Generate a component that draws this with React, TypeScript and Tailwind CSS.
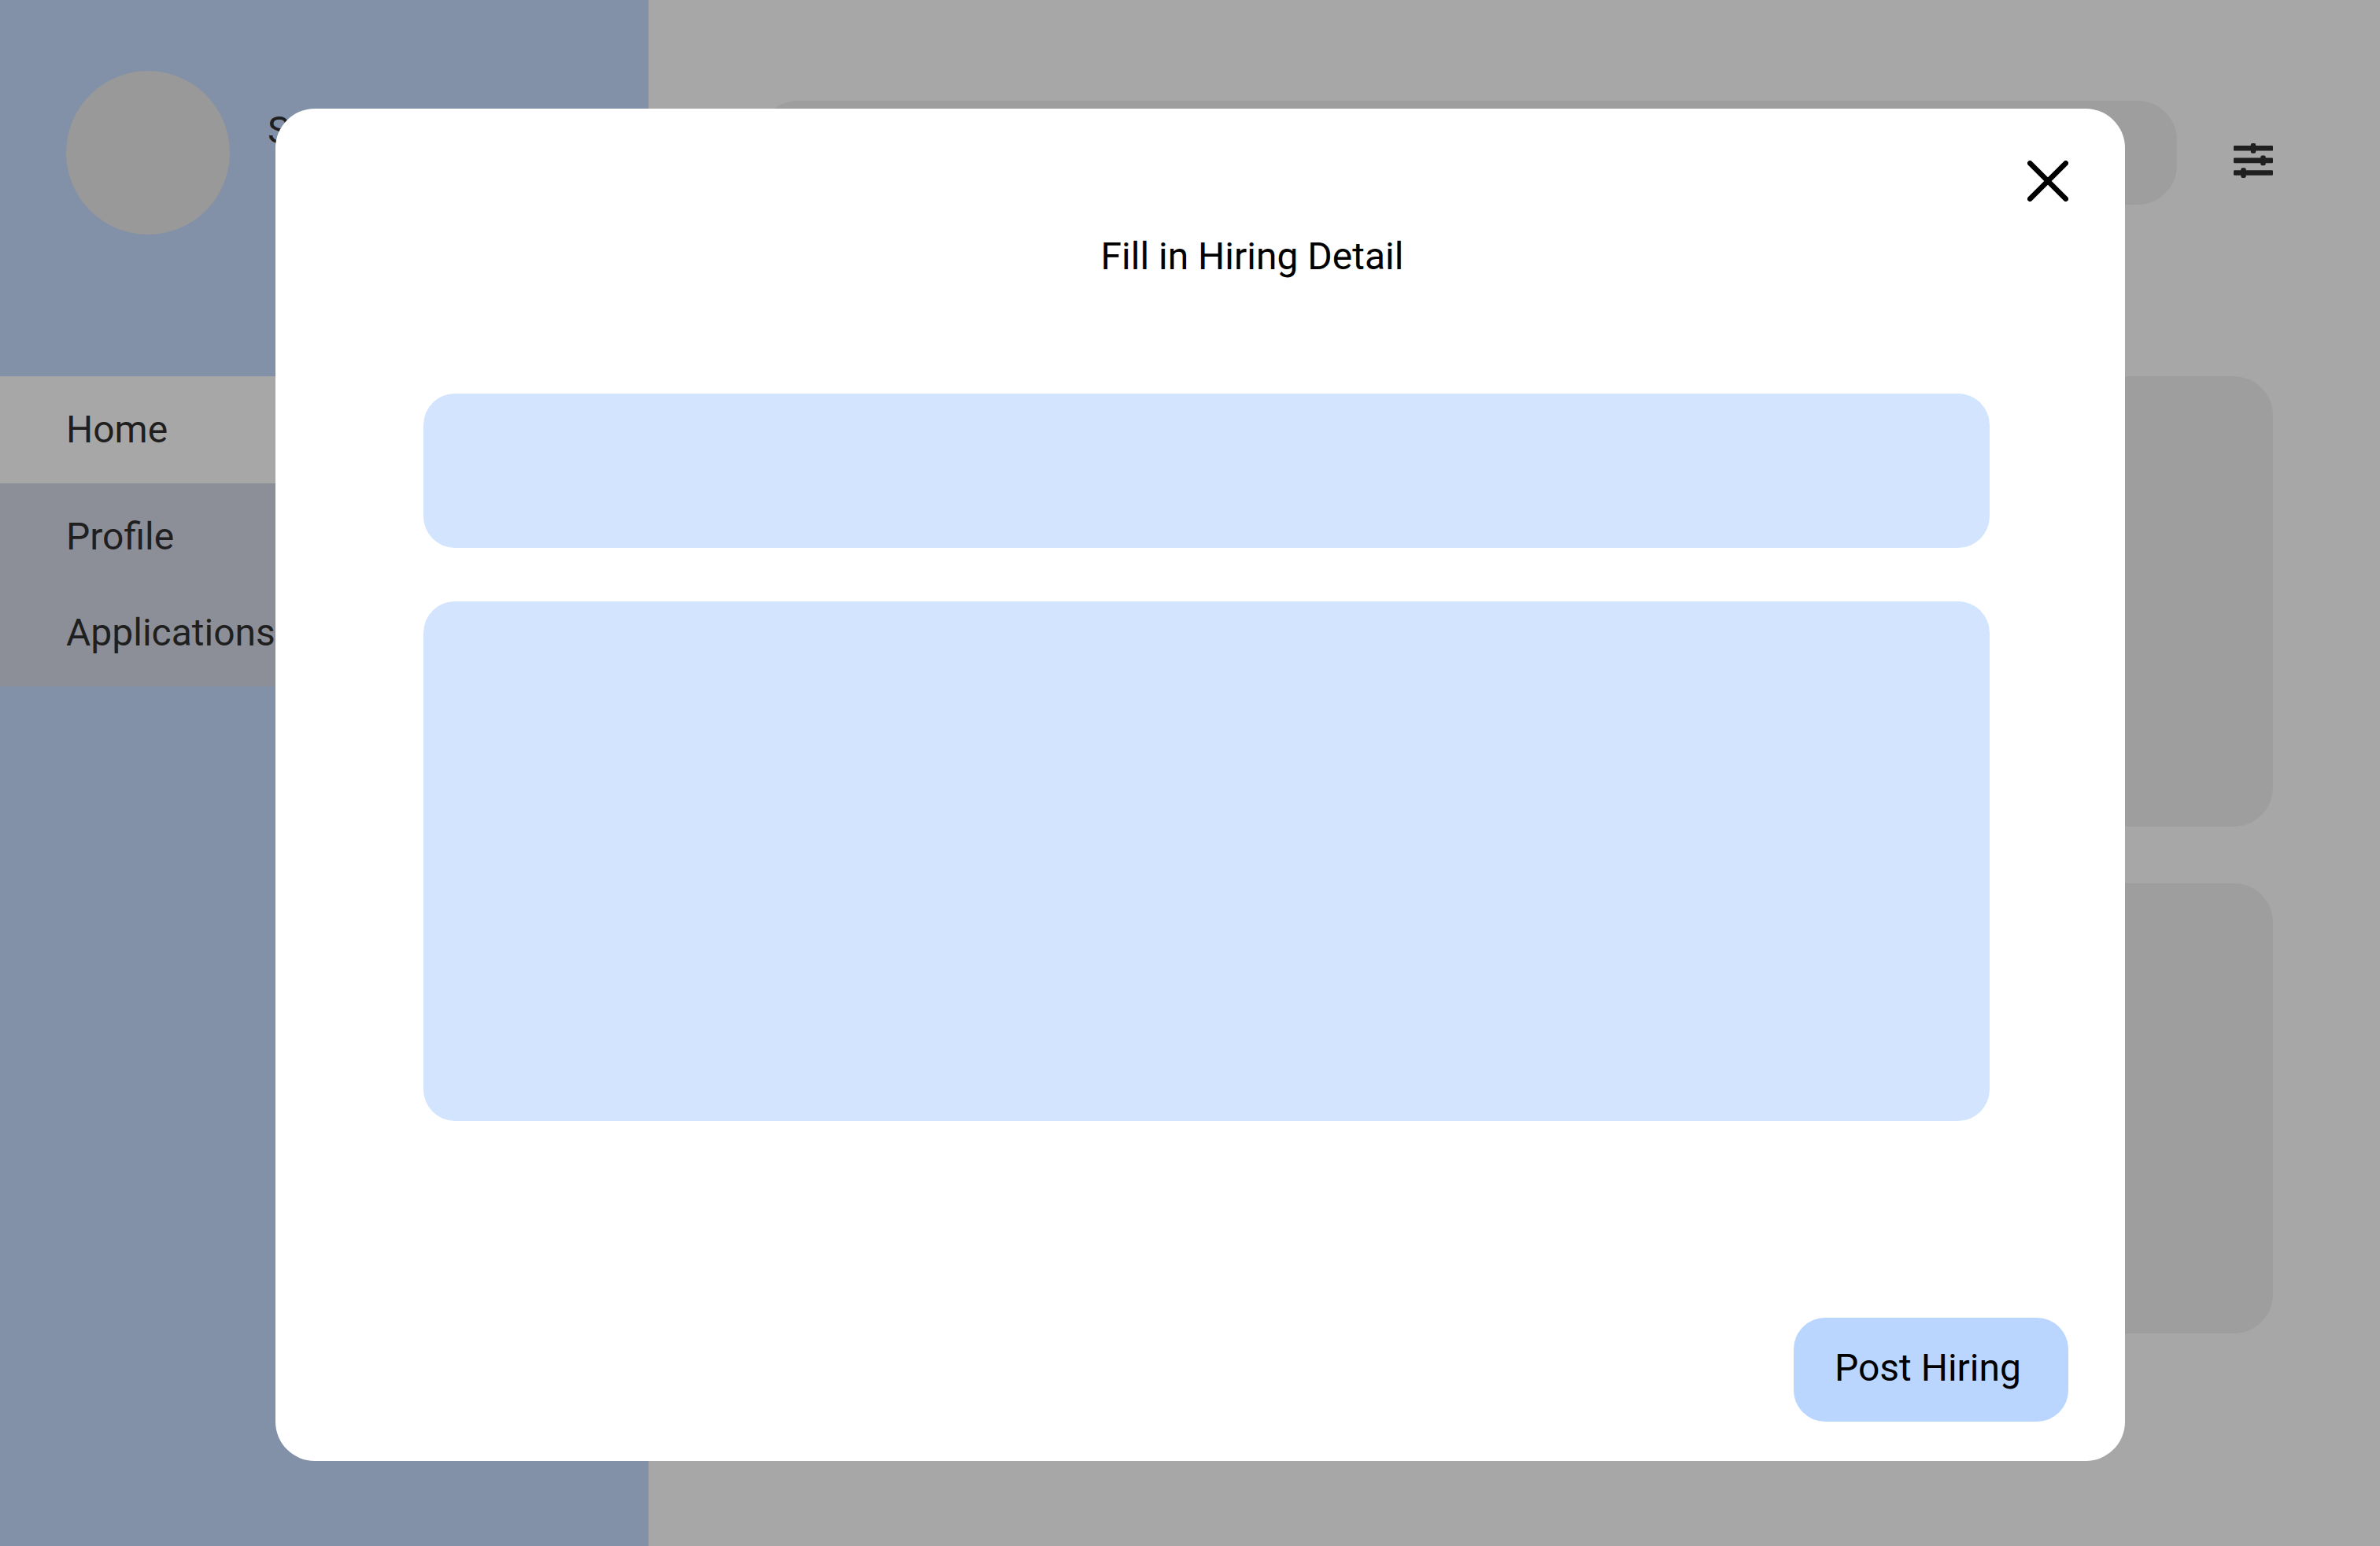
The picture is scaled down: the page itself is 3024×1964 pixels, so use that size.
import { useId } from "react";

const navLink = "block pl-[84px] text-5xl leading-[56px]";

function SlidersIcon() {
  return (
    <svg viewBox="0 0 50 44" className="h-11 w-[50px]" fill="currentColor" aria-hidden="true">
      <rect x="0" y="3" width="50" height="6.6" rx="1.2" />
      <rect x="21.8" y="0" width="6.4" height="12.7" rx="2" />
      <rect x="0" y="18.6" width="50" height="6.6" rx="1.2" />
      <rect x="34.3" y="15.6" width="6.4" height="12.7" rx="2" />
      <rect x="0" y="34.2" width="50" height="6.6" rx="1.2" />
      <rect x="9.3" y="31.2" width="6.4" height="12.7" rx="2" />
    </svg>
  );
}

function CloseIcon() {
  return (
    <svg
      viewBox="0 0 52 52"
      className="size-[52px]"
      fill="none"
      stroke="currentColor"
      strokeWidth="6.6"
      strokeLinecap="round"
      aria-hidden="true"
    >
      <path d="M3.3 3.3 48.7 48.7M48.7 3.3 3.3 48.7" />
    </svg>
  );
}

function Sidebar() {
  return (
    <aside className="w-[824px] shrink-0 bg-[#8291a8]">
      <div className="flex gap-12 pt-[90px] pl-[84px]">
        <div className="size-[208px] rounded-full bg-[#999999]" />
        <p className="pt-12 text-5xl leading-[56px]">S</p>
      </div>
      <nav className="mt-[180px]">
        <a href="#home" className={`${navLink} bg-[#a7a7a7] py-10`}>
          Home
        </a>
        <div className="flex flex-col gap-[66px] bg-[#8c8f98] pt-10 pb-10">
          <a href="#profile" className={navLink}>
            Profile
          </a>
          <a href="#applications" className={navLink}>
            Applications
          </a>
        </div>
      </nav>
    </aside>
  );
}

function Listing() {
  return (
    <main className="grow pt-32 pr-[136px] pl-[140px]">
      <div className="flex items-center gap-[72px]">
        <input
          type="search"
          aria-label="Search"
          className="h-[132px] min-w-0 grow rounded-[50px] bg-[#9e9e9e] px-12 text-5xl outline-none"
        />
        <button type="button" aria-label="Filters" className="pt-5">
          <SlidersIcon />
        </button>
      </div>
      <div className="mt-[218px] flex flex-col gap-[72px]">
        <article className="h-[572px] rounded-[50px] bg-[#9e9e9e]" />
        <article className="h-[572px] rounded-[50px] bg-[#9e9e9e]" />
      </div>
    </main>
  );
}

function HiringDialog() {
  const titleId = useId();
  return (
    <div className="absolute inset-0 flex items-start pt-[138px] pr-[324px] pl-[350px]">
      <form
        role="dialog"
        aria-modal="true"
        aria-labelledby={titleId}
        className="flex grow flex-col rounded-[50px] bg-white pt-[66px] pr-[72px] pb-[50px] pl-[188px] text-black"
      >
        <button type="button" aria-label="Close" className="self-end">
          <CloseIcon />
        </button>
        <h1 id={titleId} className="mt-[42px] pl-4 text-center text-5xl leading-[56px]">
          Fill in Hiring Detail
        </h1>
        <div className="mt-[146px] mr-[100px] flex flex-col gap-[68px]">
          <input
            type="text"
            aria-label="Job title"
            className="h-[196px] rounded-[40px] bg-[#d3e4ff] px-12 text-5xl outline-none"
          />
          <textarea
            aria-label="Job description"
            className="h-[660px] resize-none rounded-[40px] bg-[#d3e4ff] p-12 text-5xl outline-none"
          />
        </div>
        <button
          type="submit"
          className="mt-[250px] self-end rounded-[40px] bg-[#bad6ff] pt-9 pr-[60px] pb-10 pl-[52px] text-5xl leading-[56px]"
        >
          Post Hiring
        </button>
      </form>
    </div>
  );
}

export default function App() {
  return (
    <div className="relative flex min-h-screen bg-[#a7a7a7] font-[Roboto,sans-serif] text-[#1f1f1f]">
      <Sidebar />
      <Listing />
      <HiringDialog />
    </div>
  );
}
